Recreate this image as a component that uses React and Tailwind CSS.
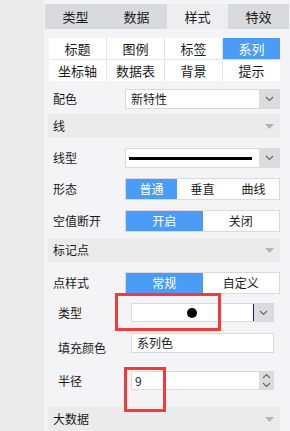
import React from 'react';

const Chevron = ({ up = false }) => (
  <svg width="9" height="6" viewBox="0 0 9 6" className={up ? 'rotate-180' : ''}>
    <path d="M1 1 L4.5 4.5 L8 1" fill="none" stroke="#666" strokeWidth="1.1" />
  </svg>
);

const Triangle = () => (
  <svg width="9" height="5" viewBox="0 0 9 5">
    <path d="M0 0 H9 L4.5 5 Z" fill="#b4b4b6" />
  </svg>
);

const SectionHeader = ({ title, className = '' }) => (
  <div className={`ml-[4px] w-[232px] h-[24px] bg-[#ebebeb] pl-[5px] pr-[6px] flex items-center justify-between ${className}`}>
    <span>{title}</span>
    <Triangle />
  </div>
);

const Segmented = ({ items, active = 0 }) => (
  <div className="w-[155px] h-[22px] flex border border-[#d9d9dd] bg-white">
    {items.map((t, i) => (
      <div
        key={t}
        className={`flex-1 flex items-center justify-center ${i === active ? 'bg-[#4a9cf6] text-white' : 'text-[#1a1a1a]'}`}
      >
        {t}
      </div>
    ))}
  </div>
);

const Row = ({ label, children, className = '', indent = false }) => (
  <div className={`flex items-center ${className}`}>
    <div className={indent ? 'w-[87px] pl-[14px]' : 'w-[81px] pl-[9px]'}>{label}</div>
    {children}
  </div>
);

export default function App() {
  const tabs = ['类型', '数据', '样式', '特效'];
  const subTabs = ['标题', '图例', '标签', '系列', '坐标轴', '数据表', '背景', '提示'];

  return (
    <div
      className="flex w-[290px] h-[431px] overflow-hidden text-[12px] leading-[16px] text-[#1a1a1a]"
      style={{ fontFamily: '"Noto Sans CJK SC", "Noto Sans", sans-serif' }}
    >
      <div className="w-[44px] bg-[#ebebeb]" />
      <div className="relative flex-1 bg-[#f4f4f6]">
        {/* Top tabs */}
        <div className="mt-[4px] ml-px w-[244px] h-[25px] flex text-[13px]">
          {tabs.map((t, i) => (
            <div
              key={t}
              className={`flex-1 flex items-center justify-center ${i === 2 ? 'bg-[#eeeef0]' : 'bg-[#d9dadd]'}`}
            >
              {t}
            </div>
          ))}
        </div>

        {/* Sub tabs */}
        <div className="mt-[9px] ml-[5px] w-[231px] grid grid-cols-4 gap-px bg-[#e4e4e6] text-[13px]">
          {subTabs.map((t) => (
            <div
              key={t}
              className={`h-[21px] flex items-center justify-center ${t === '系列' ? 'bg-[#4a9cf6] text-white' : 'bg-white'}`}
            >
              {t}
            </div>
          ))}
        </div>

        <Row label="配色" className="mt-[8px] h-[20px]">
          <div className="w-[155px] h-[20px] flex border border-[#dadade] bg-white">
            <div className="flex-1 pl-[5px] flex items-center">新特性</div>
            <div className="w-[20px] bg-[#dcdcdf] flex items-center justify-center">
              <Chevron />
            </div>
          </div>
        </Row>

        <SectionHeader title="线" className="mt-[5px]" />

        <Row label="线型" className="mt-[10px] h-[20px]">
          <div className="w-[155px] h-[20px] flex border border-[#dadade] bg-white">
            <div className="flex-1 pl-[3px] pr-[7px] flex items-center">
              <div className="w-full h-[3px] bg-black" />
            </div>
            <div className="w-[20px] bg-[#dcdcdf] flex items-center justify-center">
              <Chevron />
            </div>
          </div>
        </Row>

        <Row label="形态" className="mt-[10px] h-[22px]">
          <Segmented items={['普通', '垂直', '曲线']} />
        </Row>

        <Row label="空值断开" className="mt-[10px] h-[22px]">
          <Segmented items={['开启', '关闭']} />
        </Row>

        <SectionHeader title="标记点" className="mt-[6px]" />

        <Row label="点样式" className="mt-[10px] h-[22px]">
          <Segmented items={['常规', '自定义']} />
        </Row>

        <Row label="类型" indent className="mt-[9px] h-[19px]">
          <div className="w-[143px] h-[19px] flex border border-[#dadade] bg-white">
            <div className="flex-1 flex items-center justify-center pr-[2px] border-r border-[#1010d0]">
              <div className="w-[10px] h-[10px] rounded-full bg-black" />
            </div>
            <div className="w-[19px] bg-[#dcdcdf] flex items-center justify-center">
              <Chevron />
            </div>
          </div>
        </Row>

        <div className="mt-[11px] flex items-start">
          <div className="w-[87px] pl-[14px] mt-[7px]">填充颜色</div>
          <div className="w-[143px] h-[20px] border border-[#dadade] bg-white pl-[5px] flex items-center">
            系列色
          </div>
        </div>

        <Row label="半径" indent className="mt-[15px] h-[19px]">
          <div className="w-[143px] h-[19px] flex border border-[#dadade] bg-white">
            <div className="flex-1 pl-[3px] flex items-center text-[#1a1a40]">9</div>
            <div className="w-[14px] bg-[#dcdcdf] flex flex-col items-center justify-center gap-[3px]">
              <Chevron up />
              <Chevron />
            </div>
          </div>
        </Row>

        <SectionHeader title="大数据" className="mt-[17px]" />

        {/* Red annotation boxes */}
        <div className="absolute left-[71px] top-[293px] w-[106px] h-[38px] border-[3px] border-[#f23b3b]" />
        <div className="absolute left-[80px] top-[367px] w-[42px] h-[45px] border-[3px] border-[#f23b3b]" />
      </div>
    </div>
  );
}
